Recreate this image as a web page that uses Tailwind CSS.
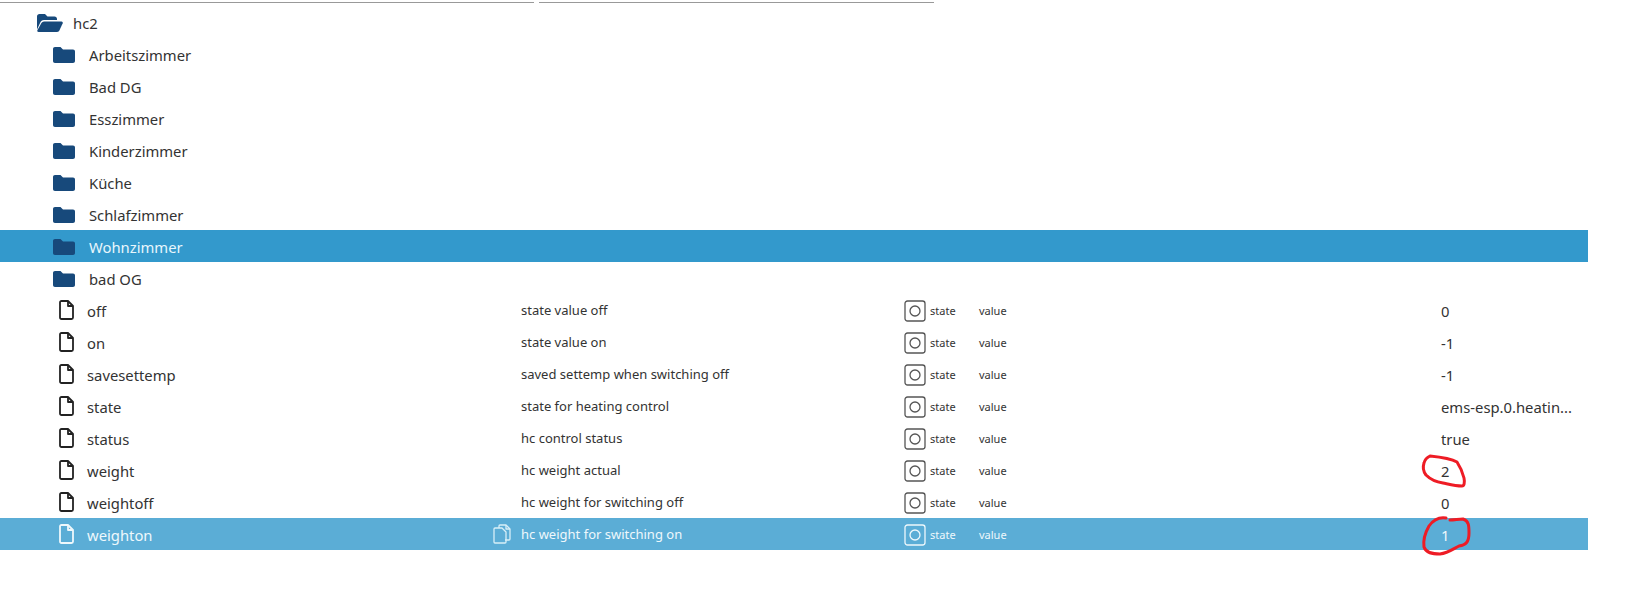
<!DOCTYPE html>
<html>
<head>
<meta charset="utf-8">
<script src="https://cdn.jsdelivr.net/npm/@tailwindcss/browser@4"></script>
<title>hc2</title>
</head>
<body class="bg-white overflow-hidden">
<div class="relative w-[1627px] h-[597px] font-['Noto_Sans',sans-serif] text-[#333]">
  <div class="flex gap-[5px] pt-[2px] h-[6px]">
    <div class="w-[534px] h-[1px] border-t border-[#999]"></div>
    <div class="w-[395px] h-[1px] border-t border-[#999]"></div>
  </div>
  <div class="w-[1588px]">
    <div class="h-[32px] pt-[2px] flex items-center pl-[36px]">
      <svg class="w-[27px] h-[20px] mr-[10px] mb-[1px]" viewBox="0 0 27 20"><path fill="#17497b" d="M1 3.500C1 2 2 1 3.500 1h5.500l2.500 2.500h7c1.500 0 2.500 1 2.500 2.500V7H8C6 7 5 8 4.300 9.500L1 16.500Z"/><path fill="#17497b" d="M8 8.500h17.500c1 0 1.500 1 1.200 1.800l-3.200 7c-.5 1-1.200 1.700-2.500 1.700H2.500c-1 0-1.500-.8-1.100-1.700l3.900-7C6 9.200 7 8.500 8 8.500Z"/></svg>
      <span class="text-[14.8px]">hc2</span>
    </div>

    <div class="h-[32px] pt-[2px] flex items-center pl-[53px]"><svg class="w-[22px] h-[16px] mr-[14px] mb-[1px]" viewBox="0 0 22 16"><path fill="#17497b" d="M0 2C0 .8.800 0 2 0h5.500l2.500 2.500h10c1.200 0 2 .8 2 2V14c0 1.200-.8 2-2 2H2c-1.200 0-2-.8-2-2Z"/></svg><span class="text-[14.8px]">Arbeitszimmer</span></div>
    <div class="h-[32px] pt-[2px] flex items-center pl-[53px]"><svg class="w-[22px] h-[16px] mr-[14px] mb-[1px]" viewBox="0 0 22 16"><path fill="#17497b" d="M0 2C0 .8.800 0 2 0h5.500l2.500 2.500h10c1.200 0 2 .8 2 2V14c0 1.200-.8 2-2 2H2c-1.200 0-2-.8-2-2Z"/></svg><span class="text-[14.8px]">Bad DG</span></div>
    <div class="h-[32px] pt-[2px] flex items-center pl-[53px]"><svg class="w-[22px] h-[16px] mr-[14px] mb-[1px]" viewBox="0 0 22 16"><path fill="#17497b" d="M0 2C0 .8.800 0 2 0h5.500l2.500 2.500h10c1.200 0 2 .8 2 2V14c0 1.200-.8 2-2 2H2c-1.200 0-2-.8-2-2Z"/></svg><span class="text-[14.8px]">Esszimmer</span></div>
    <div class="h-[32px] pt-[2px] flex items-center pl-[53px]"><svg class="w-[22px] h-[16px] mr-[14px] mb-[1px]" viewBox="0 0 22 16"><path fill="#17497b" d="M0 2C0 .8.800 0 2 0h5.500l2.500 2.500h10c1.200 0 2 .8 2 2V14c0 1.200-.8 2-2 2H2c-1.200 0-2-.8-2-2Z"/></svg><span class="text-[14.8px]">Kinderzimmer</span></div>
    <div class="h-[32px] pt-[2px] flex items-center pl-[53px]"><svg class="w-[22px] h-[16px] mr-[14px] mb-[1px]" viewBox="0 0 22 16"><path fill="#17497b" d="M0 2C0 .8.800 0 2 0h5.500l2.500 2.500h10c1.200 0 2 .8 2 2V14c0 1.200-.8 2-2 2H2c-1.200 0-2-.8-2-2Z"/></svg><span class="text-[14.8px]">Küche</span></div>
    <div class="h-[32px] pt-[2px] flex items-center pl-[53px]"><svg class="w-[22px] h-[16px] mr-[14px] mb-[1px]" viewBox="0 0 22 16"><path fill="#17497b" d="M0 2C0 .8.800 0 2 0h5.500l2.500 2.500h10c1.200 0 2 .8 2 2V14c0 1.200-.8 2-2 2H2c-1.200 0-2-.8-2-2Z"/></svg><span class="text-[14.8px]">Schlafzimmer</span></div>
    <div class="h-[32px] pt-[2px] flex items-center pl-[53px] bg-[#3399cc] text-[#e8f6fc]"><svg class="w-[22px] h-[16px] mr-[14px] mb-[1px]" viewBox="0 0 22 16"><path fill="#17497b" d="M0 2C0 .8.800 0 2 0h5.500l2.500 2.500h10c1.200 0 2 .8 2 2V14c0 1.200-.8 2-2 2H2c-1.200 0-2-.8-2-2Z"/></svg><span class="text-[14.8px]">Wohnzimmer</span></div>
    <div class="h-[32px] pt-[2px] flex items-center pl-[53px]"><svg class="w-[22px] h-[16px] mr-[14px] mb-[1px]" viewBox="0 0 22 16"><path fill="#17497b" d="M0 2C0 .8.800 0 2 0h5.500l2.500 2.500h10c1.200 0 2 .8 2 2V14c0 1.200-.8 2-2 2H2c-1.200 0-2-.8-2-2Z"/></svg><span class="text-[14.8px]">bad OG</span></div>

    <div class="h-[32px] pt-[2px] flex items-center">
      <div class="w-[521px] flex items-center pl-[59px]"><svg class="w-[15px] h-[20px] mr-[13px] mb-[2px]" viewBox="0 0 15 20" fill="none" stroke="#222" stroke-width="1.800" stroke-linejoin="round"><path d="M2.500 1h6.500l5 5v11.500c0 .9-.6 1.500-1.500 1.500h-10c-.9 0-1.500-.6-1.500-1.500v-15C1 1.600 1.600 1 2.500 1Z"/><path d="M9 1v5h5"/></svg><span class="text-[14.8px]">off</span></div>
      <div class="w-[383px] text-[13px]">state value off</div>
      <svg class="w-[22px] h-[22px] mr-[4px]" viewBox="0 0 22 22" fill="none" stroke="#555" stroke-width="1.300"><rect x="1" y="1" width="20" height="20" rx="2.500"/><circle cx="11" cy="11" r="5"/></svg>
      <div class="w-[49px] text-[11px]">state</div>
      <div class="w-[462px] text-[11px]">value</div>
      <div class="text-[14.8px]">0</div>
    </div>
    <div class="h-[32px] pt-[2px] flex items-center">
      <div class="w-[521px] flex items-center pl-[59px]"><svg class="w-[15px] h-[20px] mr-[13px] mb-[2px]" viewBox="0 0 15 20" fill="none" stroke="#222" stroke-width="1.800" stroke-linejoin="round"><path d="M2.500 1h6.500l5 5v11.500c0 .9-.6 1.500-1.500 1.500h-10c-.9 0-1.500-.6-1.500-1.500v-15C1 1.600 1.600 1 2.500 1Z"/><path d="M9 1v5h5"/></svg><span class="text-[14.8px]">on</span></div>
      <div class="w-[383px] text-[13px]">state value on</div>
      <svg class="w-[22px] h-[22px] mr-[4px]" viewBox="0 0 22 22" fill="none" stroke="#555" stroke-width="1.300"><rect x="1" y="1" width="20" height="20" rx="2.500"/><circle cx="11" cy="11" r="5"/></svg>
      <div class="w-[49px] text-[11px]">state</div>
      <div class="w-[462px] text-[11px]">value</div>
      <div class="text-[14.8px]">-1</div>
    </div>
    <div class="h-[32px] pt-[2px] flex items-center">
      <div class="w-[521px] flex items-center pl-[59px]"><svg class="w-[15px] h-[20px] mr-[13px] mb-[2px]" viewBox="0 0 15 20" fill="none" stroke="#222" stroke-width="1.800" stroke-linejoin="round"><path d="M2.500 1h6.500l5 5v11.500c0 .9-.6 1.500-1.500 1.500h-10c-.9 0-1.500-.6-1.500-1.500v-15C1 1.600 1.600 1 2.500 1Z"/><path d="M9 1v5h5"/></svg><span class="text-[14.8px]">savesettemp</span></div>
      <div class="w-[383px] text-[13px]">saved settemp when switching off</div>
      <svg class="w-[22px] h-[22px] mr-[4px]" viewBox="0 0 22 22" fill="none" stroke="#555" stroke-width="1.300"><rect x="1" y="1" width="20" height="20" rx="2.500"/><circle cx="11" cy="11" r="5"/></svg>
      <div class="w-[49px] text-[11px]">state</div>
      <div class="w-[462px] text-[11px]">value</div>
      <div class="text-[14.8px]">-1</div>
    </div>
    <div class="h-[32px] pt-[2px] flex items-center">
      <div class="w-[521px] flex items-center pl-[59px]"><svg class="w-[15px] h-[20px] mr-[13px] mb-[2px]" viewBox="0 0 15 20" fill="none" stroke="#222" stroke-width="1.800" stroke-linejoin="round"><path d="M2.500 1h6.500l5 5v11.500c0 .9-.6 1.500-1.500 1.500h-10c-.9 0-1.500-.6-1.500-1.500v-15C1 1.600 1.600 1 2.500 1Z"/><path d="M9 1v5h5"/></svg><span class="text-[14.8px]">state</span></div>
      <div class="w-[383px] text-[13px]">state for heating control</div>
      <svg class="w-[22px] h-[22px] mr-[4px]" viewBox="0 0 22 22" fill="none" stroke="#555" stroke-width="1.300"><rect x="1" y="1" width="20" height="20" rx="2.500"/><circle cx="11" cy="11" r="5"/></svg>
      <div class="w-[49px] text-[11px]">state</div>
      <div class="w-[462px] text-[11px]">value</div>
      <div class="text-[14.8px]">ems-esp.0.heatin...</div>
    </div>
    <div class="h-[32px] pt-[2px] flex items-center">
      <div class="w-[521px] flex items-center pl-[59px]"><svg class="w-[15px] h-[20px] mr-[13px] mb-[2px]" viewBox="0 0 15 20" fill="none" stroke="#222" stroke-width="1.800" stroke-linejoin="round"><path d="M2.500 1h6.500l5 5v11.500c0 .9-.6 1.500-1.500 1.500h-10c-.9 0-1.500-.6-1.500-1.500v-15C1 1.600 1.600 1 2.500 1Z"/><path d="M9 1v5h5"/></svg><span class="text-[14.8px]">status</span></div>
      <div class="w-[383px] text-[13px]">hc control status</div>
      <svg class="w-[22px] h-[22px] mr-[4px]" viewBox="0 0 22 22" fill="none" stroke="#555" stroke-width="1.300"><rect x="1" y="1" width="20" height="20" rx="2.500"/><circle cx="11" cy="11" r="5"/></svg>
      <div class="w-[49px] text-[11px]">state</div>
      <div class="w-[462px] text-[11px]">value</div>
      <div class="text-[14.8px]">true</div>
    </div>
    <div class="h-[32px] pt-[2px] flex items-center">
      <div class="w-[521px] flex items-center pl-[59px]"><svg class="w-[15px] h-[20px] mr-[13px] mb-[2px]" viewBox="0 0 15 20" fill="none" stroke="#222" stroke-width="1.800" stroke-linejoin="round"><path d="M2.500 1h6.500l5 5v11.500c0 .9-.6 1.500-1.500 1.500h-10c-.9 0-1.500-.6-1.500-1.500v-15C1 1.600 1.600 1 2.500 1Z"/><path d="M9 1v5h5"/></svg><span class="text-[14.8px]">weight</span></div>
      <div class="w-[383px] text-[13px]">hc weight actual</div>
      <svg class="w-[22px] h-[22px] mr-[4px]" viewBox="0 0 22 22" fill="none" stroke="#555" stroke-width="1.300"><rect x="1" y="1" width="20" height="20" rx="2.500"/><circle cx="11" cy="11" r="5"/></svg>
      <div class="w-[49px] text-[11px]">state</div>
      <div class="w-[462px] text-[11px]">value</div>
      <div class="text-[14.8px]">2</div>
    </div>
    <div class="h-[32px] pt-[2px] flex items-center">
      <div class="w-[521px] flex items-center pl-[59px]"><svg class="w-[15px] h-[20px] mr-[13px] mb-[2px]" viewBox="0 0 15 20" fill="none" stroke="#222" stroke-width="1.800" stroke-linejoin="round"><path d="M2.500 1h6.500l5 5v11.500c0 .9-.6 1.500-1.500 1.500h-10c-.9 0-1.500-.6-1.500-1.500v-15C1 1.600 1.600 1 2.500 1Z"/><path d="M9 1v5h5"/></svg><span class="text-[14.8px]">weightoff</span></div>
      <div class="w-[383px] text-[13px]">hc weight for switching off</div>
      <svg class="w-[22px] h-[22px] mr-[4px]" viewBox="0 0 22 22" fill="none" stroke="#555" stroke-width="1.300"><rect x="1" y="1" width="20" height="20" rx="2.500"/><circle cx="11" cy="11" r="5"/></svg>
      <div class="w-[49px] text-[11px]">state</div>
      <div class="w-[462px] text-[11px]">value</div>
      <div class="text-[14.8px]">0</div>
    </div>
    <div class="h-[32px] pt-[2px] flex items-center bg-[#5badd6] text-[#eef8fc]">
      <div class="w-[521px] flex items-center pl-[59px]"><svg class="w-[15px] h-[20px] mr-[13px] mb-[2px]" viewBox="0 0 15 20" fill="none" stroke="#eef8fc" stroke-width="1.800" stroke-linejoin="round"><path d="M2.500 1h6.500l5 5v11.500c0 .9-.6 1.500-1.500 1.500h-10c-.9 0-1.500-.6-1.500-1.500v-15C1 1.600 1.600 1 2.500 1Z"/><path d="M9 1v5h5"/></svg><span class="text-[14.8px]">weighton</span>
        <svg class="w-[18px] h-[20px] ml-auto mr-[10px] mb-[2px]" viewBox="0 0 18 20" fill="none" stroke="#d8eff8" stroke-width="1.300" stroke-linejoin="round"><path d="M6 4V2c0-.6.400-1 1-1h6l4 4v10c0 .6-.4 1-1 1h-4"/><path d="M13 1v4h4"/><path d="M2 4h7l4 4v10c0 .6-.4 1-1 1H2c-.6 0-1-.4-1-1V5c0-.6.400-1 1-1Z"/></svg>
      </div>
      <div class="w-[383px] text-[13px]">hc weight for switching on</div>
      <svg class="w-[22px] h-[22px] mr-[4px]" viewBox="0 0 22 22" fill="none" stroke="#eef8fc" stroke-width="1.300"><rect x="1" y="1" width="20" height="20" rx="2.500"/><circle cx="11" cy="11" r="5"/></svg>
      <div class="w-[49px] text-[11px]">state</div>
      <div class="w-[462px] text-[11px]">value</div>
      <div class="text-[14.8px]">1</div>
    </div>
  </div>
  <svg class="absolute left-0 top-0 pointer-events-none" width="1627" height="597" viewBox="0 0 1627 597" fill="none" stroke="#ee1c25" stroke-width="3" stroke-linecap="round" stroke-linejoin="round">
    <path d="M1430 456C1440 457 1450 458 1457 462C1461 468 1463 474 1464 478C1465 483 1464 486 1462 486C1455 486 1448 484 1443 483C1436 482 1431 480 1426 475C1423 471 1423 466 1424 463C1425 459 1428 457 1430 456Z"/>
    <path d="M1446 518C1440 517 1434 519 1429 526C1425 533 1423 540 1424 547C1426 553 1432 554 1440 554C1448 553 1453 549 1459 546C1466 545 1469 542 1469 533C1469 526 1469 521 1463 519C1458 519 1455 520 1450 520"/>
  </svg>
</div>
</body>
</html>
